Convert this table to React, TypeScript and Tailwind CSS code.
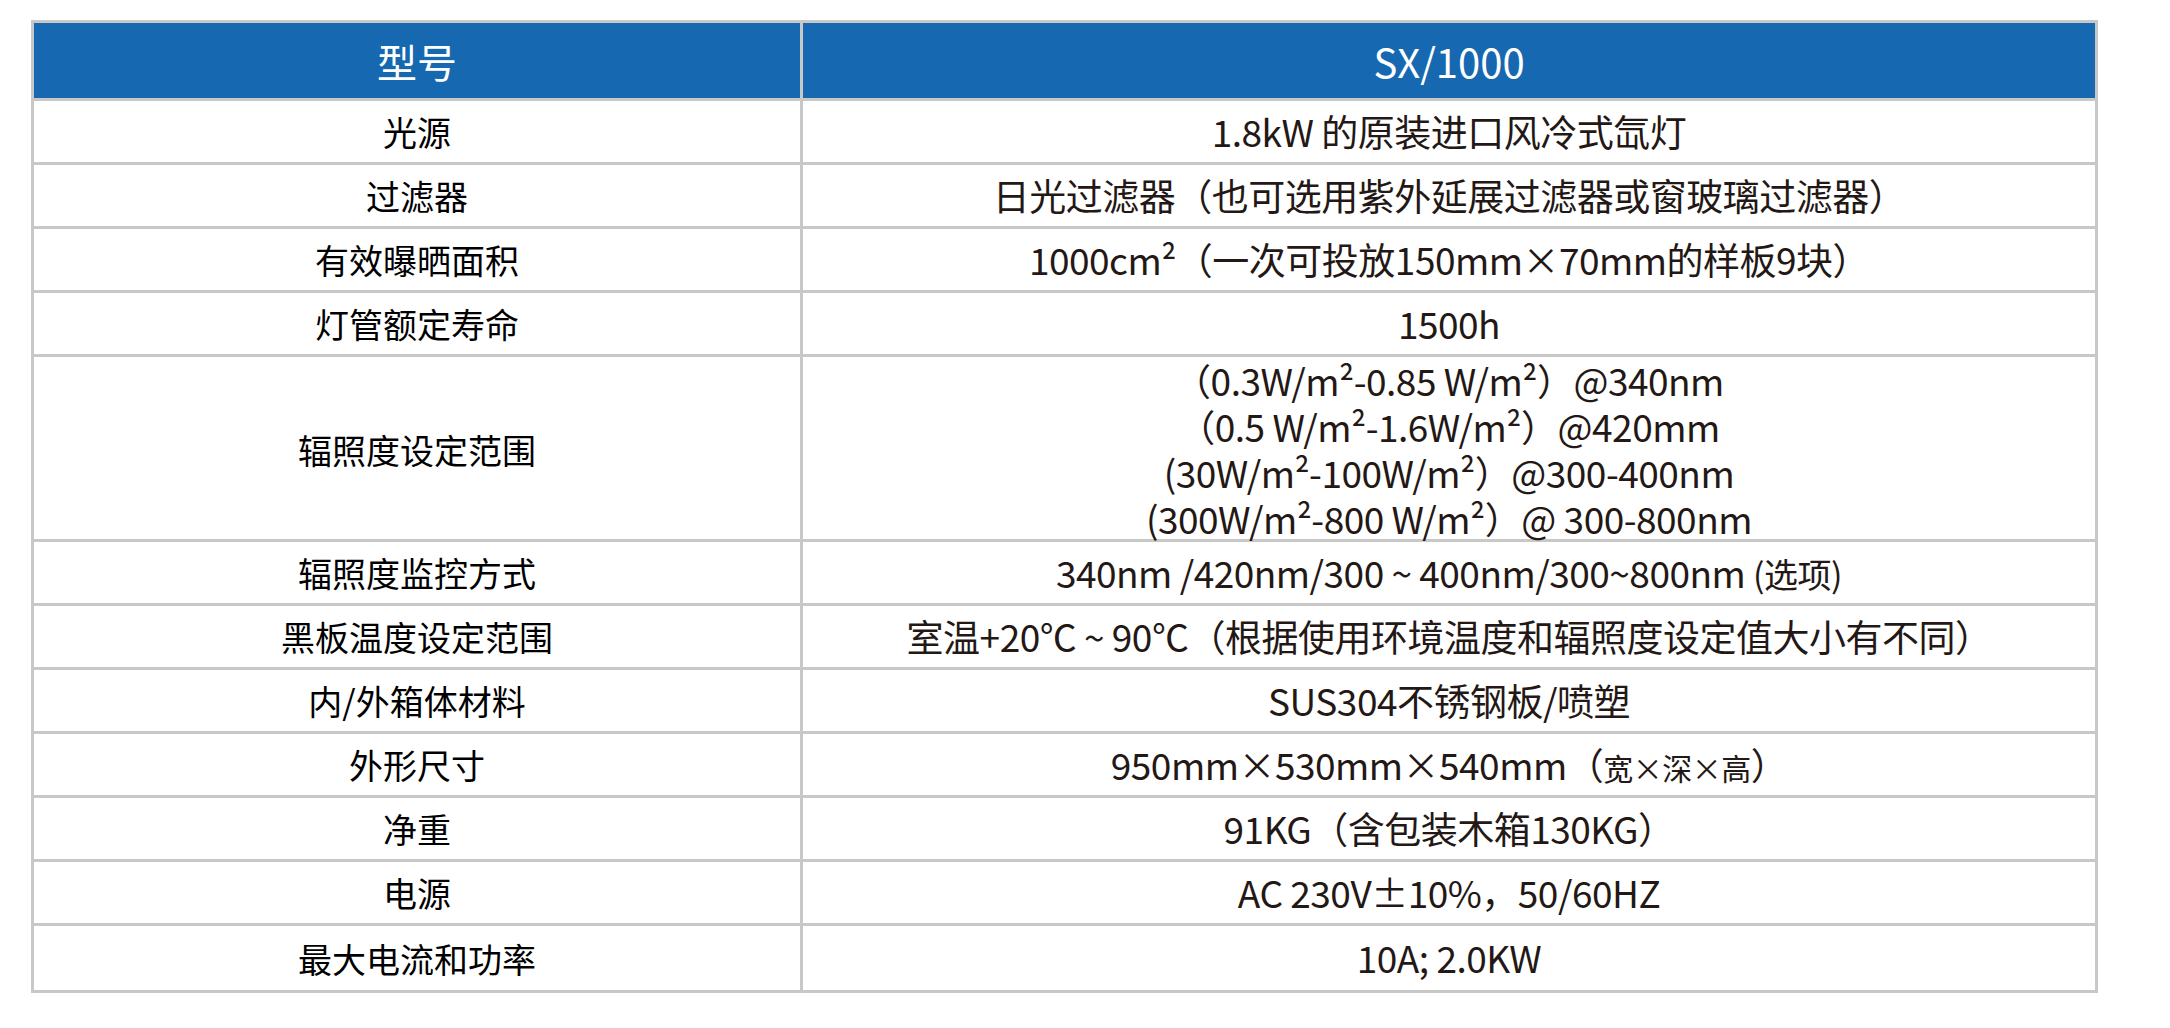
const rows: { label: string; value: React.ReactNode; tall?: boolean }[] = [
  { label: '光源', value: '1.8kW 的原装进口风冷式氙灯' },
  { label: '过滤器', value: '日光过滤器（也可选用紫外延展过滤器或窗玻璃过滤器）' },
  { label: '有效曝晒面积', value: '1000cm²（一次可投放150mm×70mm的样板9块）' },
  { label: '灯管额定寿命', value: '1500h' },
  {
    label: '辐照度设定范围',
    tall: true,
    value: (
      <div className="flex flex-col items-center leading-[46px]">
        <span>（0.3W/m²-0.85 W/m²）@340nm</span>
        <span>（0.5 W/m²-1.6W/m²）@420mm</span>
        <span>(30W/m²-100W/m²）@300-400nm</span>
        <span>(300W/m²-800 W/m²）@ 300-800nm</span>
      </div>
    ),
  },
  {
    label: '辐照度监控方式',
    value: (
      <span>
        340nm /420nm/300 ~ 400nm/300~800nm <span className="text-[34px]">(选项)</span>
      </span>
    ),
  },
  { label: '黑板温度设定范围', value: '室温+20℃ ~ 90℃（根据使用环境温度和辐照度设定值大小有不同）' },
  { label: '内/外箱体材料', value: 'SUS304不锈钢板/喷塑' },
  {
    label: '外形尺寸',
    value: (
      <span>
        950mm×530mm×540mm（<span className="text-[30px]">宽×深×高</span>）
      </span>
    ),
  },
  { label: '净重', value: '91KG（含包装木箱130KG）' },
  { label: '电源', value: 'AC 230V±10%，50/60HZ' },
  { label: '最大电流和功率', value: '10A; 2.0KW' },
];

export default function App() {
  return (
    <div
      className="min-h-screen bg-white pl-[31px] pt-[20px]"
      style={{ fontFamily: '"Noto Sans CJK SC", "Noto Sans", sans-serif' }}
    >
      <div className="w-[2067px] border-[3px] border-[#c8c8c8]">
        <div className="grid h-[78px] grid-cols-[769px_1fr] border-b-[3px] border-[#c8c8c8] bg-[#1668b0] text-[40px] text-white">
          <div className="flex items-center justify-center border-r-[3px] border-[#c8c8c8]">型号</div>
          <div className="flex items-center justify-center">SX/1000</div>
        </div>
        {rows.map((r, i) => (
          <div
            key={r.label}
            className={`grid grid-cols-[769px_1fr] text-[#231815] ${
              i < rows.length - 1 ? 'border-b-[3px] border-[#c8c8c8]' : ''
            } ${r.tall ? 'h-[185px]' : 'h-[64px]'}`}
          >
            <div className="flex items-center justify-center border-r-[3px] border-[#c8c8c8] text-[34px] text-black">
              {r.label}
            </div>
            <div className="flex items-center justify-center text-[37px] tracking-[-0.5px]">{r.value}</div>
          </div>
        ))}
      </div>
    </div>
  );
}
